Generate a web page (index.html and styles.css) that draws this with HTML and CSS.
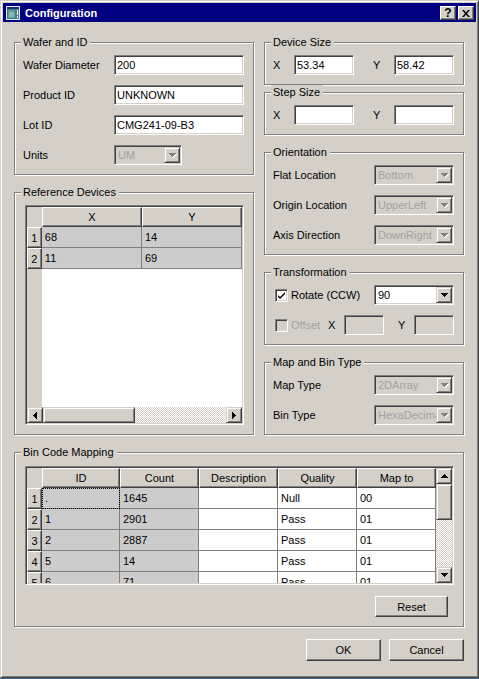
FILE: index.html
```html
<!DOCTYPE html>
<html lang="en">
<head>
    <meta charset="UTF-8">
    <title>Configuration</title>
    <link rel="stylesheet" href="styles.css">
</head>
<body>
<div class="window">
    <div class="titlebar">
        <svg class="app-icon" width="14" height="14" viewBox="0 0 14 14">
            <rect x="0" y="0" width="14" height="14" fill="#e8e8e8"/>
            <rect x="1" y="1" width="12" height="12" fill="#3f7f86"/>
            <rect x="1" y="1" width="12" height="2" fill="#1d2f7a"/>
            <rect x="2" y="4" width="7" height="8" fill="#5f9c96"/>
            <rect x="3" y="6" width="5" height="5" fill="#88b8b0"/>
            <rect x="11" y="4" width="1" height="5" fill="#fff"/>
            <rect x="11" y="10" width="1" height="2" fill="#fff"/>
        </svg>
        <span class="caption">Configuration</span>
        <div class="caption-btns">
            <span class="cap-btn help">?</span>
            <span class="cap-btn">
                <svg width="8" height="7" viewBox="0 0 8 7"><path d="M0 0h2l2 2.5 2-2.5h2l-3 3.5 3 3.5h-2l-2-2.5-2 2.5h-2l3-3.5z" fill="#000"/></svg>
            </span>
        </div>
    </div>

    <div class="client">
        <div class="columns">
            <div class="col-left">
                <fieldset class="group">
                    <legend>Wafer and ID</legend>
                    <div class="form wafer-form">
                        <label>Wafer Diameter</label><input class="edit" value="200">
                        <label>Product ID</label><input class="edit" value="UNKNOWN">
                        <label>Lot ID</label><input class="edit" value="CMG241-09-B3">
                        <label class="lbl-disabled">Units</label>
                        <div class="combo disabled units">
                            <span class="combo-text">UM</span>
                            <span class="drop"><svg width="7" height="4"><path d="M0 0h7v1h-1v1h-1v1h-1v1h-1v-1h-1v-1h-1v-1h-1z"/></svg></span>
                        </div>
                    </div>
                </fieldset>

                <fieldset class="group ref-group">
                    <legend>Reference Devices</legend>
                    <div class="view ref-view">
                        <div class="cells">
                            <table class="grid">
                                <colgroup><col class="w-rh"><col class="w-ref"><col class="w-ref"></colgroup>
                                <tr><th class="corner"></th><th>X</th><th>Y</th></tr>
                                <tr><th class="rh">1</th><td class="ro">68</td><td class="ro">14</td></tr>
                                <tr><th class="rh">2</th><td class="ro">11</td><td class="ro">69</td></tr>
                            </table>
                        </div>
                        <div class="hscroll">
                            <span class="sbtn"><svg width="4" height="7"><path d="M3 0h1v7h-1v-1h-1v-1h-1v-1h-1v-1h1v-1h1v-1h1z"/></svg></span>
                            <span class="thumb h-thumb"></span>
                            <span class="track"></span>
                            <span class="sbtn"><svg width="4" height="7"><path d="M0 0h1v1h1v1h1v1h1v1h-1v1h-1v1h-1v1h-1z"/></svg></span>
                        </div>
                    </div>
                </fieldset>
            </div>

            <div class="col-right">
                <fieldset class="group">
                    <legend>Device Size</legend>
                    <div class="xy-row">
                        <span class="lbl">X</span><input class="edit" value="53.34">
                        <span class="lbl">Y</span><input class="edit" value="58.42">
                    </div>
                </fieldset>

                <fieldset class="group step-group">
                    <legend>Step Size</legend>
                    <div class="xy-row">
                        <span class="lbl">X</span><input class="edit" value="">
                        <span class="lbl">Y</span><input class="edit" value="">
                    </div>
                </fieldset>

                <fieldset class="group">
                    <legend>Orientation</legend>
                    <div class="form side-form">
                        <label>Flat Location</label>
                        <div class="combo disabled"><span class="combo-text">Bottom</span><span class="drop"><svg width="7" height="4"><path d="M0 0h7v1h-1v1h-1v1h-1v1h-1v-1h-1v-1h-1v-1h-1z"/></svg></span></div>
                        <label>Origin Location</label>
                        <div class="combo disabled"><span class="combo-text">UpperLeft</span><span class="drop"><svg width="7" height="4"><path d="M0 0h7v1h-1v1h-1v1h-1v1h-1v-1h-1v-1h-1v-1h-1z"/></svg></span></div>
                        <label>Axis Direction</label>
                        <div class="combo disabled"><span class="combo-text">DownRight</span><span class="drop"><svg width="7" height="4"><path d="M0 0h7v1h-1v1h-1v1h-1v1h-1v-1h-1v-1h-1v-1h-1z"/></svg></span></div>
                    </div>
                </fieldset>

                <fieldset class="group">
                    <legend>Transformation</legend>
                    <div class="trans-row">
                        <span class="check"><svg width="9" height="9" viewBox="0 0 9 9"><path d="M1 4l2 2 5-5v2l-5 5-2-2z" fill="#000"/></svg></span>
                        <span class="check-label">Rotate (CCW)</span>
                        <div class="combo rotate"><span class="combo-text">90</span><span class="drop"><svg width="7" height="4"><path d="M0 0h7v1h-1v1h-1v1h-1v1h-1v-1h-1v-1h-1v-1h-1z"/></svg></span></div>
                    </div>
                    <div class="trans-row offset-row">
                        <span class="check off"></span>
                        <span class="check-label offset-label">Offset</span>
                        <span class="lbl-x">X</span><input class="edit small" value="" disabled>
                        <span class="lbl-y">Y</span><input class="edit small" value="" disabled>
                    </div>
                </fieldset>

                <fieldset class="group">
                    <legend>Map and Bin Type</legend>
                    <div class="form side-form">
                        <label>Map Type</label>
                        <div class="combo disabled"><span class="combo-text">2DArray</span><span class="drop"><svg width="7" height="4"><path d="M0 0h7v1h-1v1h-1v1h-1v1h-1v-1h-1v-1h-1v-1h-1z"/></svg></span></div>
                        <label>Bin Type</label>
                        <div class="combo disabled"><span class="combo-text">HexaDecimal</span><span class="drop"><svg width="7" height="4"><path d="M0 0h7v1h-1v1h-1v1h-1v1h-1v-1h-1v-1h-1v-1h-1z"/></svg></span></div>
                    </div>
                </fieldset>
            </div>
        </div>

        <fieldset class="group bin-group">
            <legend>Bin Code Mapping</legend>
            <div class="view bin-view">
                <div class="cells">
                    <table class="grid">
                        <colgroup><col class="w-rh"><col class="w-id"><col class="w-bin"><col class="w-bin"><col class="w-bin"><col class="w-bin"></colgroup>
                        <tr><th class="corner"></th><th>ID</th><th>Count</th><th>Description</th><th>Quality</th><th>Map to</th></tr>
                        <tr><th class="rh">1</th><td class="ro focus">.</td><td class="ro">1645</td><td></td><td>Null</td><td>00</td></tr>
                        <tr><th class="rh">2</th><td class="ro">1</td><td class="ro">2901</td><td></td><td>Pass</td><td>01</td></tr>
                        <tr><th class="rh">3</th><td class="ro">2</td><td class="ro">2887</td><td></td><td>Pass</td><td>01</td></tr>
                        <tr><th class="rh">4</th><td class="ro">5</td><td class="ro">14</td><td></td><td>Pass</td><td>01</td></tr>
                        <tr><th class="rh">5</th><td class="ro">6</td><td class="ro">71</td><td></td><td>Pass</td><td>01</td></tr>
                    </table>
                </div>
                <div class="vscroll">
                    <span class="sbtn"><svg width="7" height="4"><path d="M3 0h1v1h1v1h1v1h1v1h-7v-1h1v-1h1v-1h1z"/></svg></span>
                    <span class="thumb v-thumb"></span>
                    <span class="track"></span>
                    <span class="sbtn"><svg width="7" height="4"><path d="M0 0h7v1h-1v1h-1v1h-1v1h-1v-1h-1v-1h-1v-1h-1z"/></svg></span>
                </div>
            </div>
            <div class="reset-row">
                <button class="push reset">Reset</button>
            </div>
        </fieldset>

        <div class="dialog-btns">
            <button class="push">OK</button>
            <button class="push">Cancel</button>
        </div>
    </div>
</div>
</body>
</html>
```

FILE: styles.css
```css
*{
    box-sizing: border-box;
}
body{
    margin: 0;
    background: #3a6ea5;
    font-family: "Liberation Sans", Arial, sans-serif;
    font-size: 11px;
    color: #000;
}
.window{
    width: 479px;
    height: 678px;
    background: #d4d0c8;
    border: 1px solid;
    border-color: #d4d0c8 #404040 #404040 #d4d0c8;
    box-shadow: inset 1px 1px #fff, inset -1px -1px #808080;
    padding: 2px;
    display: flex;
    flex-direction: column;
}

/* title bar */
.titlebar{
    height: 19px;
    background: #000080;
    display: flex;
    align-items: center;
    padding: 0 2px 0 3px;
    flex-shrink: 0;
}
.app-icon{
    display: block;
}
.caption{
    color: #fff;
    font-weight: bold;
    margin-left: 5px;
    flex: 1;
}
.caption-btns{
    display: flex;
    gap: 2px;
    margin-top: 1px;
}
.cap-btn{
    width: 16px;
    height: 14px;
    background: #d4d0c8;
    border: 1px solid;
    border-color: #fff #404040 #404040 #fff;
    box-shadow: inset -1px -1px #808080;
    display: flex;
    align-items: center;
    justify-content: center;
    font-weight: bold;
    font-size: 12px;
    line-height: 12px;
}

/* client area */
.client{
    flex: 1;
    padding: 13px 12px 0 11px;
    display: flex;
    flex-direction: column;
}
.columns{
    display: flex;
    gap: 10px;
}
.col-left{
    width: 240px;
    display: flex;
    flex-direction: column;
    gap: 10px;
}
.col-right{
    width: 200px;
    display: flex;
    flex-direction: column;
    gap: 10px;
}
.col-right .step-group{
    margin-top: -10px;
}

/* group boxes */
.group{
    margin: 0;
    min-width: 0;
    padding: 6px 9px 9px 8px;
    border: 1px solid #808080;
    box-shadow: inset 1px 1px #fff, 1px 1px #fff;
}
.group legend{
    margin-left: -2px;
    padding: 0 3px 0 2px;
    height: 14px;
    line-height: 14px;
    background: #d4d0c8;
}
.bin-group{
    margin-top: 10px;
    padding-top: 7px;
}

/* forms */
.form{
    display: grid;
    row-gap: 10px;
    align-items: center;
}
.wafer-form{
    grid-template-columns: 91px 130px;
}
.side-form{
    grid-template-columns: 1fr 80px;
}
.form label{
    line-height: 20px;
}
.edit{
    display: block;
    height: 20px;
    margin: 0;
    padding: 0 2px;
    font: inherit;
    color: #000;
    background: #fff;
    border: 1px solid;
    border-color: #808080 #fff #fff #808080;
    box-shadow: inset 1px 1px #404040, inset -1px -1px #d4d0c8;
    outline: none;
    min-width: 0;
}
.wafer-form .edit{
    width: 130px;
}
.xy-row{
    display: flex;
    align-items: center;
}
.xy-row .lbl{
    width: 21px;
}
.xy-row .edit{
    width: 60px;
}
.xy-row .edit + .lbl{
    margin-left: 19px;
}

/* combo boxes */
.combo{
    height: 20px;
    display: flex;
    align-items: center;
    background: #fff;
    border: 1px solid;
    border-color: #808080 #fff #fff #808080;
    box-shadow: inset 1px 1px #404040, inset -1px -1px #d4d0c8;
    padding: 1px;
}
.combo.units{
    width: 68px;
}
.combo.disabled{
    background: #d4d0c8;
    color: #a0a0a0;
}
.combo-text{
    flex: 1;
    overflow: hidden;
    white-space: nowrap;
    padding-left: 2px;
}
.drop{
    width: 16px;
    height: 16px;
    flex-shrink: 0;
    background: #d4d0c8;
    border: 1px solid;
    border-color: #d4d0c8 #404040 #404040 #d4d0c8;
    box-shadow: inset 1px 1px #fff, inset -1px -1px #808080;
    display: flex;
    align-items: center;
    justify-content: center;
    fill: #000;
}
.combo.disabled .drop svg{
    fill: #808080;
    filter: drop-shadow(1px 1px 0 #fff);
}

/* transformation */
.trans-row{
    display: flex;
    align-items: center;
    height: 20px;
}
.offset-row{
    margin-top: 10px;
}
.check{
    width: 13px;
    height: 13px;
    margin-left: 2px;
    background: #fff;
    border: 1px solid;
    border-color: #808080 #fff #fff #808080;
    box-shadow: inset 1px 1px #404040, inset -1px -1px #d4d0c8;
    display: flex;
    align-items: center;
    justify-content: center;
}
.check.off{
    background: #d4d0c8;
}
.check-label{
    margin-left: 3px;
}
.combo.rotate{
    width: 80px;
    margin-left: auto;
}
.offset-label{
    width: 37px;
    color: #a0a0a0;
}
.lbl-x, .lbl-y{
    width: 16px;
}
.lbl-y{
    margin-left: 14px;
}
.edit.small{
    width: 40px;
    background: #d4d0c8;
}

/* item views */
.view{
    margin-left: 2px;
    display: flex;
    background: #fff;
    border: 1px solid;
    border-color: #808080 #fff #fff #808080;
    box-shadow: inset 1px 1px #404040, inset -1px -1px #d4d0c8;
    padding: 1px;
}
.ref-view{
    width: 219px;
    height: 220px;
    flex-direction: column;
}
.bin-view{
    width: 429px;
    height: 119px;
}
.cells{
    flex: 1;
    overflow: hidden;
    background: linear-gradient(to right, #d4d0c8 15px, #fff 15px);
}
.grid{
    border-collapse: separate;
    border-spacing: 0;
    table-layout: fixed;
}
.w-rh{ width: 15px; }
.w-ref{ width: 102px; }
.w-id{ width: 78px; }
.w-bin{ width: 79px; }
.grid th{
    font-weight: normal;
    height: 20px;
    padding: 0;
    text-align: center;
    background: #d4d0c8;
    border: 1px solid;
    border-color: #fff #404040 #404040 #fff;
    box-shadow: inset -1px -1px #808080;
    white-space: nowrap;
    overflow: hidden;
}
.grid th.corner{
    border-color: #d4d0c8;
    box-shadow: none;
}
.grid th.rh{
    height: 21px;
}
.grid td{
    height: 21px;
    padding: 0 0 0 3px;
    border-right: 1px solid #808080;
    border-bottom: 1px solid #808080;
    background: #fff;
    white-space: nowrap;
    overflow: hidden;
}
.grid td.ro{
    background: #cccccc;
}
.grid td.focus{
    outline: 1px dotted #000;
    outline-offset: -1px;
}

/* scroll bars */
.hscroll{
    height: 16px;
    display: flex;
    flex-shrink: 0;
}
.vscroll{
    width: 16px;
    display: flex;
    flex-direction: column;
    flex-shrink: 0;
}
.sbtn, .thumb{
    background: #d4d0c8;
    border: 1px solid;
    border-color: #d4d0c8 #404040 #404040 #d4d0c8;
    box-shadow: inset 1px 1px #fff, inset -1px -1px #808080;
}
.sbtn{
    width: 16px;
    height: 16px;
    flex-shrink: 0;
    display: flex;
    align-items: center;
    justify-content: center;
}
.h-thumb{
    width: 92px;
}
.v-thumb{
    height: 36px;
}
.track{
    flex: 1;
    background: repeating-conic-gradient(#d4d0c8 0 25%, #fff 0 50%) 0 0 / 2px 2px;
}

/* buttons */
.push{
    height: 21px;
    width: 75px;
    margin: 0;
    padding: 0;
    font: inherit;
    color: #000;
    background: #d4d0c8;
    border: 1px solid;
    border-color: #fff #404040 #404040 #fff;
    box-shadow: inset -1px -1px #808080;
}
.reset-row{
    display: flex;
    justify-content: flex-end;
    margin-top: 11px;
    padding-right: 6px;
}
.push.reset{
    width: 73px;
}
.dialog-btns{
    display: flex;
    justify-content: flex-end;
    gap: 8px;
    margin-top: 12px;
}
.dialog-btns .push{
    height: 22px;
}
```
